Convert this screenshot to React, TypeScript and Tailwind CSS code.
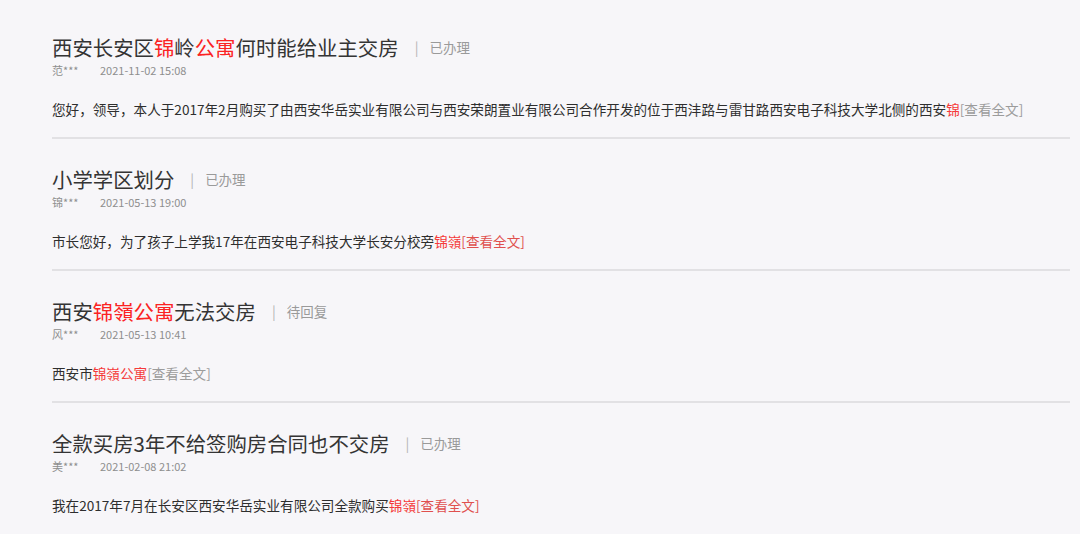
import React from 'react';

type Seg = { t: string; red?: boolean };

interface Item {
  title: Seg[];
  status: string;
  user: string;
  time: string;
  body: Seg[];
  moreRed: boolean;
}

const ITEMS: Item[] = [
  {
    title: [{ t: '西安长安区' }, { t: '锦', red: true }, { t: '岭' }, { t: '公寓', red: true }, { t: '何时能给业主交房' }],
    status: '已办理',
    user: '范***',
    time: '2021-11-02 15:08',
    body: [
      { t: '您好，领导，本人于2017年2月购买了由西安华岳实业有限公司与西安荣朗置业有限公司合作开发的位于西沣路与雷甘路西安电子科技大学北侧的西安' },
      { t: '锦', red: true },
    ],
    moreRed: false,
  },
  {
    title: [{ t: '小学学区划分' }],
    status: '已办理',
    user: '锦***',
    time: '2021-05-13 19:00',
    body: [{ t: '市长您好，为了孩子上学我17年在西安电子科技大学长安分校旁' }, { t: '锦嶺', red: true }],
    moreRed: true,
  },
  {
    title: [{ t: '西安' }, { t: '锦嶺公寓', red: true }, { t: '无法交房' }],
    status: '待回复',
    user: '风***',
    time: '2021-05-13 10:41',
    body: [{ t: '西安市' }, { t: '锦嶺公寓', red: true }],
    moreRed: false,
  },
  {
    title: [{ t: '全款买房3年不给签购房合同也不交房' }],
    status: '已办理',
    user: '美***',
    time: '2021-02-08 21:02',
    body: [{ t: '我在2017年7月在长安区西安华岳实业有限公司全款购买' }, { t: '锦嶺', red: true }],
    moreRed: true,
  },
];

const Row: React.FC<{ item: Item; last: boolean }> = ({ item, last }) => (
  <div className={`pt-[27px] pb-[18px] ${last ? '' : 'border-b-2 border-[#e2e1e4]'}`}>
    <div className="flex items-center h-[26px] whitespace-nowrap">
      <span className="text-[20.4px] leading-[26px] text-[#343434]">
        {item.title.map((s, i) => (
          <span key={i} className={s.red ? 'text-[#fb2323]' : ''}>{s.t}</span>
        ))}
      </span>
      <span className="ml-[16px] text-[14px] text-[#b4b4b4]">|</span>
      <span className="ml-[11px] text-[13.5px] text-[#9a9a9a]">{item.status}</span>
    </div>
    <div className="mt-[2px] flex h-[16px] items-center text-[11px] text-[#8e8e8e] whitespace-nowrap">
      <span className="w-[48px]">{item.user}</span>
      <span>{item.time}</span>
    </div>
    <div className="mt-[21px] h-[20px] leading-[20px] text-[13.6px] text-[#2e2e2e] whitespace-nowrap">
      {item.body.map((s, i) => (
        <span key={i} className={s.red ? 'text-[#f53a3a]' : ''}>{s.t}</span>
      ))}
      <span className={item.moreRed ? 'text-[#e0504e]' : 'text-[#9c9c9c]'}>[查看全文]</span>
    </div>
  </div>
);

export default function App() {
  return (
    <div
      className="w-[1080px] h-[534px] overflow-hidden bg-[#f7f6f9] pl-[52px] pr-[10px] pt-[7px]"
      style={{ fontFamily: '"Noto Sans CJK SC", "Noto Sans", sans-serif' }}
    >
      {ITEMS.map((it, i) => (
        <Row key={i} item={it} last={i === ITEMS.length - 1} />
      ))}
    </div>
  );
}
